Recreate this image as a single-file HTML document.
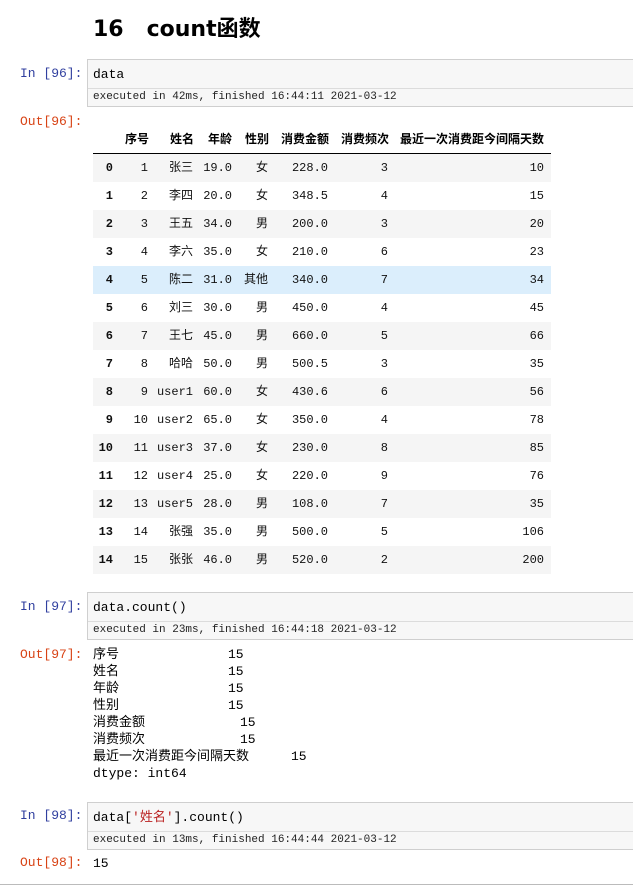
<!DOCTYPE html>
<html><head><meta charset="utf-8"><style>
*{margin:0;padding:0;box-sizing:border-box}
body{width:633px;height:889px;background:#fff;position:relative;overflow:hidden;font-family:"Liberation Mono","Noto Sans CJK SC",monospace;color:#000}
.abs{position:absolute}
h1{position:absolute;left:93px;top:11px;font:bold 22px "DejaVu Sans","Noto Sans CJK SC",sans-serif}
.pin{color:#303f9f;font-size:13px;position:absolute;left:20px}
.pout{color:#d84315;font-size:13px;position:absolute;left:20px}
.cell{position:absolute;left:87px;width:560px;border:1px solid #cfcfcf;background:#f7f7f7}
.code{height:29px;line-height:29px;padding-left:5px;font-size:13px;border-bottom:1px solid #dcdcdc}
.ex{height:17px;line-height:17px;padding-left:5px;font-size:11px;color:#222}
.row{position:absolute;left:93px;width:458px;height:28px;line-height:28px;font-size:12px;color:#111}
.row span{position:absolute;text-align:right;top:0}
.hd{position:absolute;top:131px;font:bold 12px "Liberation Sans","Noto Sans CJK SC",sans-serif;line-height:16px}
.ol{position:absolute;left:93px;font-size:13px;line-height:17px}
</style></head><body>
<h1>16&nbsp;&nbsp;&nbsp;count函数</h1>

<div class="pin" style="top:66px">In [96]:</div>
<div class="cell" style="top:59px"><div class="code">data</div><div class="ex">executed in 42ms, finished 16:44:11 2021-03-12</div></div>
<div class="pout" style="top:114px">Out[96]:</div>

<div class="hd" style="left:125px">序号</div>
<div class="hd" style="left:170px">姓名</div>
<div class="hd" style="left:208px">年龄</div>
<div class="hd" style="left:245px">性别</div>
<div class="hd" style="left:281px">消费金额</div>
<div class="hd" style="left:341px">消费频次</div>
<div class="hd" style="left:400px">最近一次消费距今间隔天数</div>
<div class="abs" style="left:93px;top:153px;width:458px;height:1px;background:#000"></div>

<div id="tbl"></div>
<script>
var d=[[1,"张三","19.0","女","228.0",3,10],[2,"李四","20.0","女","348.5",4,15],[3,"王五","34.0","男","200.0",3,20],[4,"李六","35.0","女","210.0",6,23],[5,"陈二","31.0","其他","340.0",7,34],[6,"刘三","30.0","男","450.0",4,45],[7,"王七","45.0","男","660.0",5,66],[8,"哈哈","50.0","男","500.5",3,35],[9,"user1","60.0","女","430.6",6,56],[10,"user2","65.0","女","350.0",4,78],[11,"user3","37.0","女","230.0",8,85],[12,"user4","25.0","女","220.0",9,76],[13,"user5","28.0","男","108.0",7,35],[14,"张强","35.0","男","500.0",5,106],[15,"张张","46.0","男","520.0",2,200]];
var cols=[[0,20],[20,55],[55,100],[100,139],[139,175],[175,235],[235,295],[295,451]];
var h="";
d.forEach(function(r,i){
var bg=i==4?"#dbeefc":(i%2==0?"#f5f5f5":"#fff");
h+='<div class="row" style="top:'+(154+i*28)+'px;background:'+bg+'">';
var v=[i].concat(r);
v.forEach(function(x,j){
h+='<span style="left:'+cols[j][0]+'px;width:'+(cols[j][1]-cols[j][0])+'px;'+(j==0?'font-weight:bold;':'')+'">'+x+'</span>';});
h+='</div>';});
document.getElementById("tbl").innerHTML=h;
</script>

<div class="pin" style="top:599px">In [97]:</div>
<div class="cell" style="top:592px"><div class="code">data.count()</div><div class="ex">executed in 23ms, finished 16:44:18 2021-03-12</div></div>
<div class="pout" style="top:647px">Out[97]:</div>
<div class="ol" style="top:646px">序号</div><div class="ol" style="top:646px;left:228px">15</div>
<div class="ol" style="top:663px">姓名</div><div class="ol" style="top:663px;left:228px">15</div>
<div class="ol" style="top:680px">年龄</div><div class="ol" style="top:680px;left:228px">15</div>
<div class="ol" style="top:697px">性别</div><div class="ol" style="top:697px;left:228px">15</div>
<div class="ol" style="top:714px">消费金额</div><div class="ol" style="top:714px;left:240px">15</div>
<div class="ol" style="top:731px">消费频次</div><div class="ol" style="top:731px;left:240px">15</div>
<div class="ol" style="top:748px">最近一次消费距今间隔天数</div><div class="ol" style="top:748px;left:291px">15</div>
<div class="ol" style="top:765px">dtype: int64</div>

<div class="pin" style="top:808px">In [98]:</div>
<div class="cell" style="top:802px"><div class="code">data[<span style="color:#ba2121">'姓名'</span>].count()</div><div class="ex">executed in 13ms, finished 16:44:44 2021-03-12</div></div>
<div class="pout" style="top:855px">Out[98]:</div>
<div class="ol" style="top:855px">15</div>
<div class="abs" style="left:0;top:884px;width:633px;height:1px;background:#bbb"></div>
</body></html>
